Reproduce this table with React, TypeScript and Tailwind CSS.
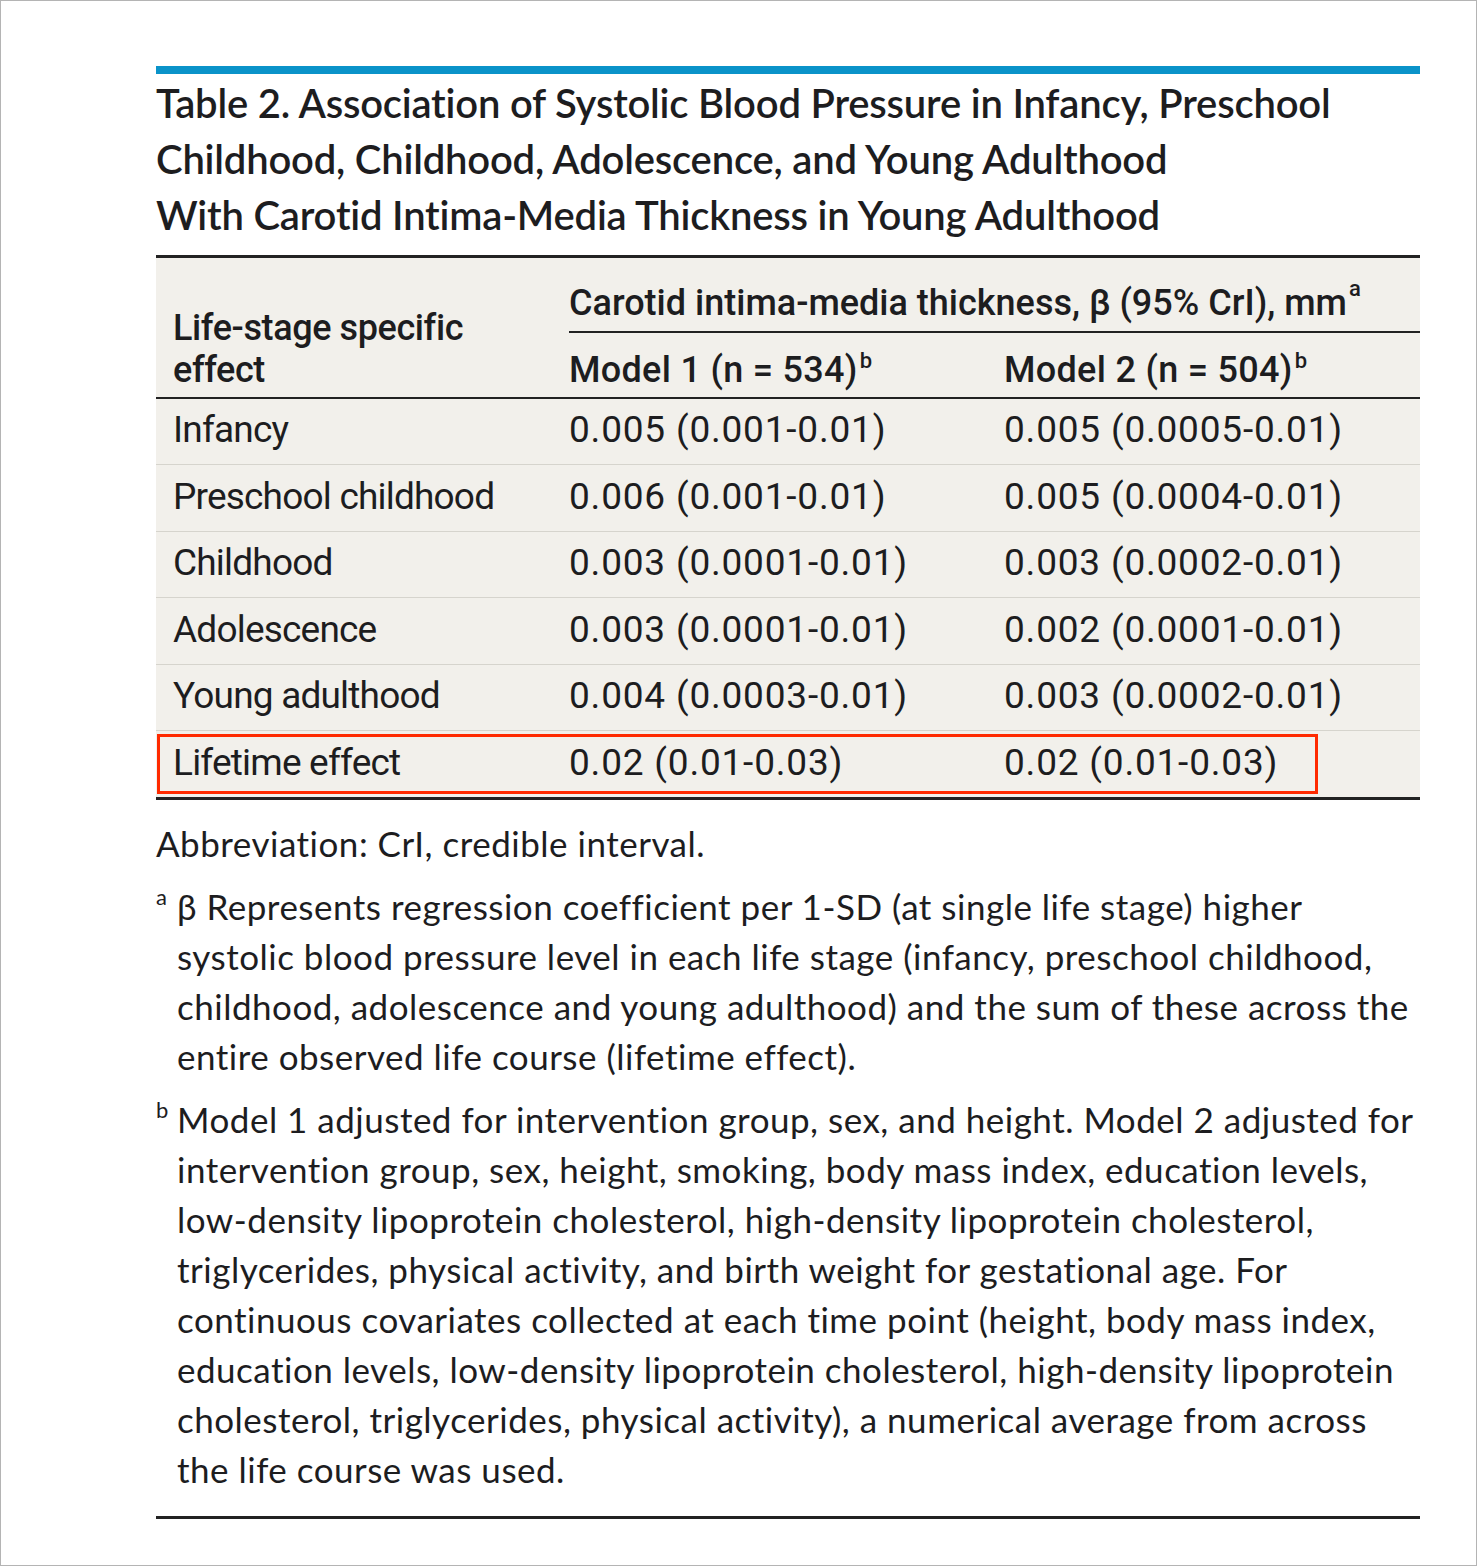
import React from 'react';

interface Row {
  stage: string;
  m1: string;
  m2: string;
}

const rows: Row[] = [
  { stage: 'Infancy', m1: '0.005 (0.001-0.01)', m2: '0.005 (0.0005-0.01)' },
  { stage: 'Preschool childhood', m1: '0.006 (0.001-0.01)', m2: '0.005 (0.0004-0.01)' },
  { stage: 'Childhood', m1: '0.003 (0.0001-0.01)', m2: '0.003 (0.0002-0.01)' },
  { stage: 'Adolescence', m1: '0.003 (0.0001-0.01)', m2: '0.002 (0.0001-0.01)' },
  { stage: 'Young adulthood', m1: '0.004 (0.0003-0.01)', m2: '0.003 (0.0002-0.01)' },
  { stage: 'Lifetime effect', m1: '0.02 (0.01-0.03)', m2: '0.02 (0.01-0.03)' },
];

const noteA = [
  'β Represents regression coefficient per 1-SD (at single life stage) higher',
  'systolic blood pressure level in each life stage (infancy, preschool childhood,',
  'childhood, adolescence and young adulthood) and the sum of these across the',
  'entire observed life course (lifetime effect).',
];

const noteB = [
  'Model 1 adjusted for intervention group, sex, and height. Model 2 adjusted for',
  'intervention group, sex, height, smoking, body mass index, education levels,',
  'low-density lipoprotein cholesterol, high-density lipoprotein cholesterol,',
  'triglycerides, physical activity, and birth weight for gestational age. For',
  'continuous covariates collected at each time point (height, body mass index,',
  'education levels, low-density lipoprotein cholesterol, high-density lipoprotein',
  'cholesterol, triglycerides, physical activity), a numerical average from across',
  'the life course was used.',
];

function Footnote({ mark, lines }: { mark: string; lines: string[] }) {
  return (
    <div className="flex">
      <div className="w-[21px] shrink-0 text-[22px] leading-[28px] pt-[2px]">{mark}</div>
      <div>
        {lines.map((l) => (
          <div key={l} className="whitespace-nowrap h-[50px] leading-[50px]">
            {l}
          </div>
        ))}
      </div>
    </div>
  );
}

export default function App() {
  const prose = { fontFamily: 'Lato, "Open Sans", sans-serif' };
  const table = { fontFamily: 'Roboto, "Liberation Sans", sans-serif' };

  return (
    <div className="w-full min-h-[1566px] bg-white border border-[#b4b4b4] text-[#1d1d1f]">
      <div className="ml-[155px] w-[1264px] pt-[65px]">
        <div className="h-[8px] bg-[#0a93c9]" />

        <h1
          className="mt-[1px] text-[40px] leading-[56px] font-semibold tracking-[-0.2px]"
          style={prose}
        >
          Table 2. Association of Systolic Blood Pressure in Infancy, Preschool
          <br />
          Childhood, Childhood, Adolescence, and Young Adulthood
          <br />
          With Carotid Intima-Media Thickness in Young Adulthood
        </h1>

        <div className="mt-[12px] border-t-[3px] border-[#222] bg-[#f2f0eb]" style={table}>
          <div className="grid grid-cols-[413px_1fr] border-b-2 border-[#222]">
            <div className="pl-[17px] flex flex-col justify-end pb-[6px] text-[36px] leading-[42px] font-medium tracking-[-0.4px]">
              <span>Life-stage specific</span>
              <span>effect</span>
            </div>
            <div>
              <div className="h-[75px] border-b-2 border-[#222] flex items-center pt-[16px] text-[36px] font-medium">
                Carotid intima-media thickness, β (95% CrI), mm
                <sup className="text-[22px] -top-[14px] ml-[2px]">a</sup>
              </div>
              <div className="grid grid-cols-[435px_1fr] h-[64px] items-center pt-[9px] text-[36px] font-medium tracking-[0.3px]">
                <span>
                  Model 1 (n = 534)<sup className="text-[22px] -top-[14px] ml-[2px]">b</sup>
                </span>
                <span>
                  Model 2 (n = 504)<sup className="text-[22px] -top-[14px] ml-[2px]">b</sup>
                </span>
              </div>
            </div>
          </div>

          {rows.map((r, i) => (
            <div
              key={r.stage}
              className={
                i === rows.length - 1
                  ? 'relative grid grid-cols-[413px_435px_1fr] h-[66.4px] items-center text-[37px] pb-[3px]'
                  : 'relative grid grid-cols-[413px_435px_1fr] h-[66.4px] items-center text-[37px] pb-[3px] border-b border-[#d6d4cd]'
              }
            >
              <span className="pl-[17px] tracking-[-0.8px]">{r.stage}</span>
              <span className="tracking-[0.8px]">{r.m1}</span>
              <span className="tracking-[0.8px]">{r.m2}</span>
              {i === rows.length - 1 && (
                <div className="absolute left-[1px] top-[3px] w-[1161px] h-[60px] border-[3px] border-[#ff2a00]" />
              )}
            </div>
          ))}
        </div>
        <div className="h-[3px] bg-[#222]" />

        <div className="text-[35px] tracking-[0.5px]" style={prose}>
          <div className="mt-[18px] leading-[50px]">Abbreviation: CrI, credible interval.</div>
          <div className="mt-[13px]">
            <Footnote mark="a" lines={noteA} />
          </div>
          <div className="mt-[13px]">
            <Footnote mark="b" lines={noteB} />
          </div>
        </div>

        <div className="mt-[22px] h-[3px] bg-[#222]" />
      </div>
    </div>
  );
}
